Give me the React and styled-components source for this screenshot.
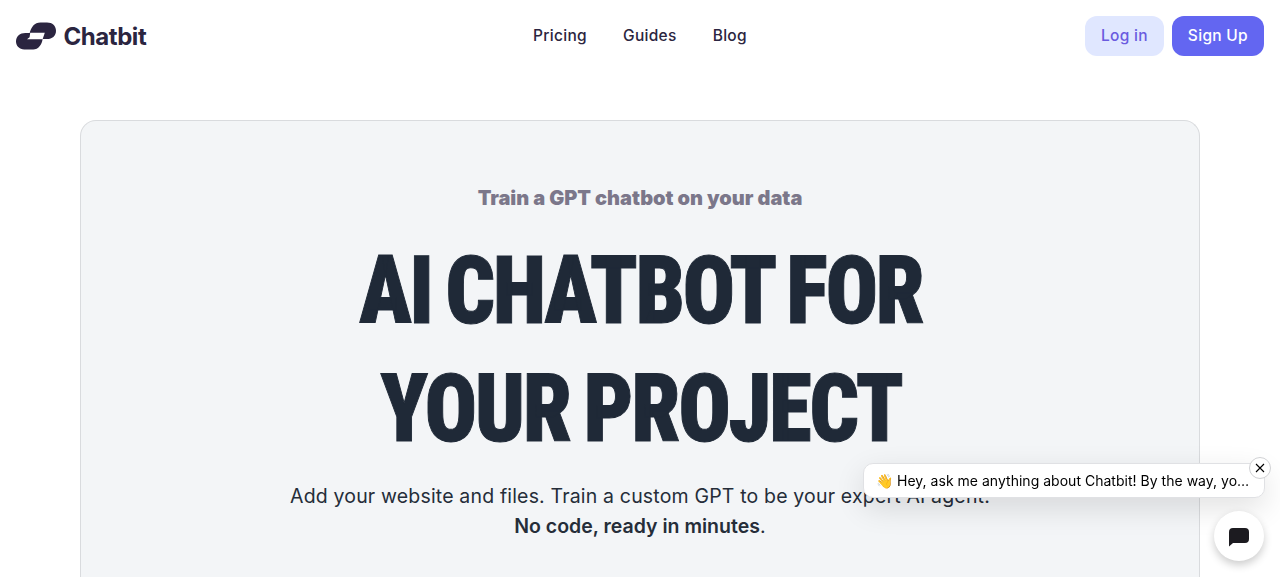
import React from 'react'
import styled, { createGlobalStyle } from 'styled-components';

function App() {
  return (
    <>
      <GlobalStyle />
      <Header>
        <Brand>
          <svg width="40" height="28" viewBox="0 0 40 28">
            <path fill="#2b2540" d="M24.5 0.5H31C36.5 0.5 40 4 40 8.7C40 14 36 17 31.2 17H26.6C26 22.5 22.3 27.5 17.2 27.5H8.3C3.4 27.5 0 24 0 19.6C0 14.4 4 11 9.3 11H13.7C15 5.3 18.5 0.5 24.5 0.5Z" />
            <path fill="#fff" d="M14.2 10.8H28.8L26.6 17.2H11L13.6 15.2Z" />
          </svg>
          <BrandName>Chatbit</BrandName>
        </Brand>
        <Nav>
          <NavLink>Pricing</NavLink>
          <NavLink>Guides</NavLink>
          <NavLink>Blog</NavLink>
        </Nav>
        <Actions>
          <Button>Log in</Button>
          <Button $primary>Sign Up</Button>
        </Actions>
      </Header>

      <Hero>
        <Eyebrow>Train a GPT chatbot on your data</Eyebrow>
        <Title>
          <TitleLine>AI CHATBOT FOR</TitleLine>
          <TitleLine>YOUR PROJECT</TitleLine>
        </Title>
        <Description>
          Add your website and files. Train a custom GPT to be your expert AI agent.
          <br />
          <strong>No code, ready in minutes</strong>.
        </Description>
      </Hero>

      <Message>
        <MessageText>👋 Hey, ask me anything about Chatbit! By the way, yo…</MessageText>
        <CloseButton>
          <svg width="10" height="10" viewBox="0 0 10 10" fill="none" stroke="#000" strokeWidth="1.1">
            <path d="M1 1L9 9M9 1L1 9" />
          </svg>
        </CloseButton>
      </Message>
      <ChatButton>
        <svg width="20" height="19" viewBox="0 0 20 19">
          <path fill="#1c1b20" d="M4 0H16Q20 0 20 4V11Q20 15 16 15H4L0 18.6V4Q0 0 4 0Z" />
        </svg>
      </ChatButton>
    </>
  )
}

export default App;

const GlobalStyle = createGlobalStyle`
* {
    box-sizing: border-box;
}

body {
    margin: 0;
    background: #fff;
    font-family: Inter, "Liberation Sans", sans-serif;
}

button {
    font-family: inherit;
    border: none;
    cursor: pointer;
}
`;

const Header = styled.header`
display: grid;
grid-template-columns: 1fr auto 1fr;
align-items: center;
height: 72px;
padding: 0 16px;
`;

const Brand = styled.div`
display: flex;
align-items: center;
gap: 7.5px;
`;

const BrandName = styled.span`
font-size: 24px;
font-weight: 750;
letter-spacing: -0.45px;
color: #2b2540;
`;

const Nav = styled.nav`
display: flex;
gap: 36px;
padding-bottom: 2px;
`;

const NavLink = styled.a`
font-size: 15.5px;
font-weight: 500;
letter-spacing: 0.3px;
color: #2b2540;
cursor: pointer;
`;

const Actions = styled.div`
display: flex;
justify-content: flex-end;
gap: 8px;
`;

const Button = styled.button`
height: 40px;
padding: 0 16px 2px;
border-radius: 12px;
font-size: 15.5px;
font-weight: 500;
letter-spacing: 0.3px;
background: ${(props) => (props.$primary ? '#6366f1' : '#e0e7ff')};
color: ${(props) => (props.$primary ? '#fff' : '#6a5bdf')};
`;

const Hero = styled.section`
height: 457px;
margin: 48px 80px 0;
padding-top: 62px;
border: 1px solid #d9dbde;
border-bottom: none;
border-radius: 16px 16px 0 0;
background: #f3f5f7;
text-align: center;
`;

const Eyebrow = styled.p`
margin: 0;
font-size: 20px;
line-height: 30px;
font-weight: 900;
color: #7b778a;
`;

const Title = styled.h1`
margin: 19px 0 0;
font-family: Roboto, sans-serif;
font-size: 95px;
line-height: 118px;
font-weight: 900;
font-stretch: 75%;
letter-spacing: -2.3px;
word-spacing: -4.5px;
-webkit-text-stroke: 1px #1f2937;
color: #1f2937;
`;

const TitleLine = styled.span`
display: block;
white-space: nowrap;
transform: translateX(1px) scaleX(0.912);
`;

const Description = styled.p`
margin: 13px 0 0;
font-size: 19.5px;
line-height: 30px;
letter-spacing: 0.17px;
color: #252d39;

strong {
    font-weight: 600;
    letter-spacing: 0;
}
`;

const Message = styled.div`
position: fixed;
top: 463px;
right: 15px;
width: 402px;
height: 35px;
padding: 0 12px;
border: 1px solid #e0e1e4;
border-radius: 10px;
background: #fff;
box-shadow: 0 10px 30px rgba(0, 0, 0, 0.12);
`;

const MessageText = styled.div`
font-size: 14px;
line-height: 34px;
letter-spacing: 0.02px;
color: #000;
white-space: nowrap;
`;

const CloseButton = styled.button`
position: absolute;
top: -7px;
right: -7px;
display: flex;
align-items: center;
justify-content: center;
width: 22px;
height: 22px;
padding: 0;
border: 1px solid #d0d1d4;
border-radius: 50%;
background: #fff;
`;

const ChatButton = styled.button`
position: fixed;
right: 16px;
bottom: 16px;
display: flex;
align-items: center;
justify-content: center;
width: 50px;
height: 50px;
padding: 2px 0 0;
border-radius: 50%;
background: #fff;
box-shadow: 0 4px 8px rgba(0, 0, 0, 0.2);
`;
